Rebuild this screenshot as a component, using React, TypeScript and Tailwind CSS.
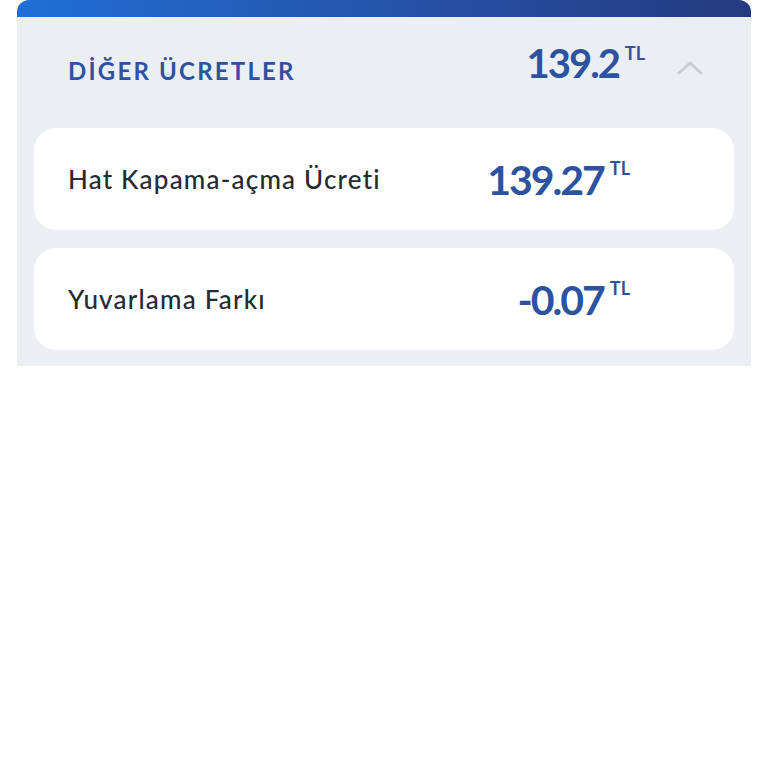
import React from "react";

const rows = [
  { label: "Hat Kapama-açma Ücreti", amount: "139.27" },
  { label: "Yuvarlama Farkı", amount: "-0.07" },
];

const App = () => {
  return (
    <div
      className="w-[768px] h-[768px] bg-white"
      style={{ fontFamily: "Lato, 'Noto Sans', sans-serif" }}
    >
      <div className="ml-[17px] w-[734px] bg-[#ebeef2] rounded-t-[12px] overflow-hidden">
        <div className="h-[17px] bg-gradient-to-r from-[#1f6fd6] to-[#243a80]" />
        <div className="flex items-center h-[111px] pl-[51px] pr-[48px]">
          <span className="mb-[4px] text-[24px] font-bold text-[#2c52a0] tracking-[2.2px]">
            DİĞER ÜCRETLER
          </span>
          <div className="ml-auto mb-[20px] flex items-start">
            <span className="text-[40px] font-bold text-[#2c52a0] tracking-[-2px] leading-none">
              139.2
            </span>
            <span className="ml-[6px] mt-[1px] text-[18px] font-bold text-[#2c52a0] leading-none">
              TL
            </span>
          </div>
          <svg
            width="26"
            height="16"
            viewBox="0 0 26 16"
            className="ml-[32px] mb-[12px]"
            fill="none"
          >
            <path
              d="M2 14 L13 4 L24 14"
              stroke="#c9ccd1"
              strokeWidth="3"
              strokeLinecap="round"
              strokeLinejoin="round"
            />
          </svg>
        </div>
        <div className="flex flex-col gap-[18px] px-[17px] pb-[16px]">
          {rows.map((r) => (
            <div
              key={r.label}
              className="flex items-center h-[102px] bg-white rounded-[22px] pl-[34px] pr-[104px]"
            >
              <span className="text-[26px] font-medium text-[#262a31] tracking-[1.2px]">
                {r.label}
              </span>
              <div className="ml-auto flex items-start">
                <span className="text-[41px] font-bold text-[#2c52a0] tracking-[-2px] leading-none">
                  {r.amount}
                </span>
                <span className="ml-[6px] text-[18px] font-bold text-[#2c52a0] leading-none">
                  TL
                </span>
              </div>
            </div>
          ))}
        </div>
      </div>
    </div>
  );
};

export default App;
